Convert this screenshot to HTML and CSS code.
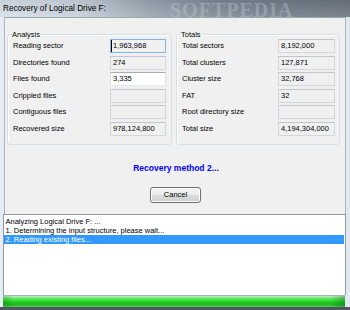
FILE: index.html
```html
<!DOCTYPE html>
<html lang="en">
<head>
    <meta charset="UTF-8">
    <title>Recovery of Logical Drive F:</title>
    <link rel="stylesheet" href="styles.css">
</head>
<body>

<div class="window">
    <div class="titlebar">
        <span class="title">Recovery of Logical Drive F:</span>
        <span class="watermark">SOFTPEDIA</span>
    </div>

    <div class="client">
        <div class="groups">
            <fieldset class="group group-left">
                <legend>Analysis</legend>
                <div class="rows">
                    <span class="label">Reading sector</span>
                    <span class="field focused">1,963,968</span>
                    <span class="label">Directories found</span>
                    <span class="field">274</span>
                    <span class="label">Files found</span>
                    <span class="field white">3,335</span>
                    <span class="label">Crippled files</span>
                    <span class="field"></span>
                    <span class="label">Contiguous files</span>
                    <span class="field"></span>
                    <span class="label">Recovered size</span>
                    <span class="field">978,124,800</span>
                </div>
            </fieldset>

            <fieldset class="group group-right">
                <legend>Totals</legend>
                <div class="rows">
                    <span class="label">Total sectors</span>
                    <span class="field">8,192,000</span>
                    <span class="label">Total clusters</span>
                    <span class="field">127,871</span>
                    <span class="label">Cluster size</span>
                    <span class="field">32,768</span>
                    <span class="label">FAT</span>
                    <span class="field">32</span>
                    <span class="label">Root directory size</span>
                    <span class="field"></span>
                    <span class="label">Total size</span>
                    <span class="field">4,194,304,000</span>
                </div>
            </fieldset>
        </div>

        <div class="method">Recovery method 2...</div>

        <div class="actions">
            <button class="btn">Cancel</button>
        </div>
    </div>

    <div class="log">
        <div class="log-line">Analyzing Logical Drive F: ...</div>
        <div class="log-line">1. Determining the input structure, please wait...</div>
        <div class="log-line selected">2. Reading existing files...</div>
    </div>

    <div class="progress"></div>
    <div class="bottom-edge"></div>
</div>

</body>
</html>
```

FILE: styles.css
```css
body {
    margin: 0;
    font-family: "Liberation Sans", Arial, sans-serif;
    font-size: 7.5px;
    color: #000;
    background-color: #dbe4ed;
}

.window {
    width: 350px;
    height: 310px;
    overflow: hidden;
    display: flex;
    flex-direction: column;
    background: linear-gradient(to right, #e6edf4, #d3dee9 50%, #e2e9f0);
}

/* title bar (aero glass) */
.titlebar {
    position: relative;
    height: 17px;
    flex: none;
    background:
        linear-gradient(to bottom, rgba(0, 0, 0, 0.06), rgba(255, 255, 255, 0.12)),
        linear-gradient(to right, #d5dee7 0%, #c6d0da 22%, #98a4b0 42%, #7c8894 60%, #6e7a86 80%, #6a747f 100%);
}

.title {
    position: absolute;
    left: 3px;
    top: 3px;
    font-size: 8.2px;
    line-height: 11px;
}

.watermark {
    position: absolute;
    left: 170px;
    top: -1px;
    font-family: "Liberation Serif", serif;
    font-weight: bold;
    font-size: 20px;
    letter-spacing: 1px;
    color: rgba(200, 210, 220, 0.35);
}

/* dialog client area */
.client {
    flex: none;
    margin: 0 4px 0 4px;
    border-top: 1px solid #9aa6b1;
    border-left: 1px solid #aab5bf;
    border-right: 1px solid #aab5bf;
    background-color: #f0f0f0;
    padding: 12px 0 11px 2px;
}

.groups {
    display: grid;
    grid-template-columns: 165px 164px;
    column-gap: 4px;
}

.group {
    margin: 0;
    padding: 0 5px 8px 5px;
    border: 1px solid #d5dfe5;
    border-radius: 3px;
    box-shadow: inset 1px 1px 0 #fff;
}

.group-right {
    padding-right: 4px;
}

.group legend {
    padding: 0;
    margin-left: -1px;
    line-height: 9px;
}

.rows {
    display: grid;
    grid-template-columns: 1fr 56px;
    grid-auto-rows: 14px;
    row-gap: 2.6px;
    align-items: center;
}

.group-right .rows {
    grid-template-columns: 1fr 57px;
}

.label {
    line-height: 14px;
}

.field {
    box-sizing: border-box;
    height: 14px;
    line-height: 12px;
    padding-left: 2px;
    border: 1px solid #d3d6db;
    border-top-color: #c2c6cc;
    background-color: #f0f0f0;
    white-space: nowrap;
}

.field.white {
    background-color: #ffffff;
    border-color: #abadb3 #e2e3ea #e3e9ef #dbdfe6;
}

.field.focused {
    border-color: #7eb4ea;
    border-left: 1px solid #7eb4ea;
    box-shadow: inset 1px 0 0 #000;
}

.method {
    margin-top: 18px;
    text-align: center;
    font-weight: bold;
    font-size: 8.5px;
    line-height: 10px;
    color: #0000ff;
}

.actions {
    margin-top: 14px;
    display: flex;
    justify-content: center;
}

.btn {
    width: 51px;
    height: 16px;
    margin-right: 1px;
    padding: 0;
    font-family: "Liberation Sans", Arial, sans-serif;
    font-size: 7.5px;
    color: #000;
    border: 1px solid #707070;
    border-radius: 3px;
    background: linear-gradient(to bottom, #f2f2f2 0%, #ebebeb 50%, #dddddd 51%, #cfcfcf 100%);
    box-shadow: inset 0 0 0 1px #fcfcfc;
}

/* log list */
.log {
    flex: 1;
    margin: 0 4px 0 3px;
    border: 1px solid #8e9aa5;
    border-bottom: none;
    background-color: #ffffff;
    padding-top: 2px;
}

.log-line {
    padding-left: 1.5px;
    line-height: 9px;
    white-space: nowrap;
}

.log-line.selected {
    background-color: #3399ff;
    color: #ffffff;
    margin-right: 1px;
}

.progress {
    flex: none;
    height: 11px;
    margin: 0 5px 0 3px;
    border-top: 1px solid #a9b2ba;
    background:
        linear-gradient(to right, rgba(0, 80, 0, 0.25), rgba(0, 0, 0, 0) 3%, rgba(0, 0, 0, 0) 96%, rgba(0, 60, 0, 0.3)),
        linear-gradient(to bottom, #c9f4c9 0%, #6fe66f 18%, #3ddf3d 40%, #1fcc1f 55%, #22b922 80%, #52cf52 100%);
}

.bottom-edge {
    flex: none;
    height: 3px;
    background-color: #4f5862;
}
```
